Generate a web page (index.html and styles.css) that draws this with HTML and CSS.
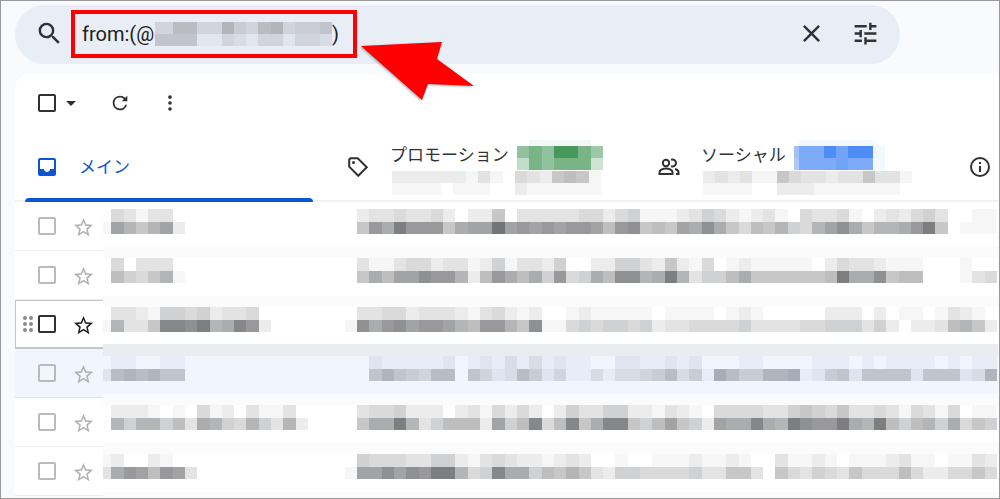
FILE: index.html
```html
<!DOCTYPE html>
<html lang="ja">
<head>
  <meta charset="UTF-8">
  <meta name="viewport" content="width=device-width, initial-scale=1.0">
  <title>メール検索</title>
  <link rel="stylesheet" href="styles.css">
  <script src="script.js" defer></script>
</head>
<body>
  <header class="header">
    <form class="search-bar">
      <button type="button" class="icon-btn" aria-label="検索">
        <svg class="icon-lg" viewBox="0 0 24 24"><path d="M15.5 14h-.79l-.28-.27A6.47 6.47 0 0 0 16 9.5 6.5 6.5 0 1 0 9.5 16c1.61 0 3.09-.59 4.23-1.57l.27.28v.79l5 4.99L20.49 19l-4.99-5zm-6 0a4.5 4.5 0 1 1 0-9 4.5 4.5 0 0 1 0 9z"/></svg>
      </button>
      <div class="query">
        <input type="text" class="query-input" aria-label="メールを検索" value="from:(@">
        <span class="clip query-mosaic"><svg class="mosaic" data-cells="336633743673445 555511321331332"></svg></span>
        <span>)</span>
        <svg class="arrow" viewBox="0 0 114 60"><path d="M1 4 82 0 77 17 114 44 68 42 62 58z"/></svg>
      </div>
      <button type="button" class="icon-btn clear-btn" aria-label="検索をクリア">
        <svg class="icon-lg" viewBox="0 0 24 24"><path d="M19 6.41 17.59 5 12 10.59 6.41 5 5 6.41 10.59 12 5 17.59 6.41 19 12 13.41 17.59 19 19 17.59 13.41 12z"/></svg>
      </button>
      <button type="button" class="icon-btn" aria-label="検索オプションを表示">
        <svg class="icon-lg" viewBox="0 0 24 24"><path d="M3 17v2h6v-2H3zM3 5v2h10V5H3zm10 16v-2h8v-2h-8v-2h-2v6h2zM7 9v2H3v2h4v2h2V9H7zm14 4v-2H11v2h10zm-6-4h2V7h4V5h-4V3h-2v6z"/></svg>
      </button>
    </form>
  </header>

  <main class="panel">
    <div class="toolbar">
      <input type="checkbox" class="check dark" aria-label="すべて選択">
      <button class="icon-btn caret-btn" aria-label="選択"><svg class="caret" viewBox="0 0 10 5"><path d="M0 0h10L5 5z"/></svg></button>
      <button class="icon-btn refresh-btn" aria-label="更新">
        <svg class="icon" viewBox="0 0 24 24"><path d="M17.65 6.35A7.96 7.96 0 0 0 12 4a8 8 0 1 0 7.73 10h-2.08A6 6 0 1 1 12 6c1.66 0 3.14.69 4.22 1.78L14 10h6V4l-2.35 2.35z"/></svg>
      </button>
      <button class="icon-btn more-btn" aria-label="その他">
        <svg class="icon" viewBox="0 0 24 24"><circle cx="12" cy="5.5" r="2"/><circle cx="12" cy="12" r="2"/><circle cx="12" cy="18.5" r="2"/></svg>
      </button>
    </div>

    <nav class="tabs">
      <a href="#main" class="tab active">
        <svg class="tab-icon" viewBox="0 0 24 24"><path d="M19 3H5a2 2 0 0 0-2 2v14c0 1.1.9 2 2 2h14a2 2 0 0 0 2-2V5a2 2 0 0 0-2-2zm0 11h-4c0 1.66-1.35 3-3 3s-3-1.34-3-3H5V5h14v9z"/></svg>
        <span>メイン</span>
      </a>
      <a href="#promotions" class="tab">
        <svg class="tab-icon line" viewBox="0 0 24 24"><path d="M3.2 4.5v7.2L12.3 20.8l8.5-8.5L11.7 3.2H4.5z"/><circle class="dot" cx="7.5" cy="7.5" r="1.5"/></svg>
        <span class="tab-text">
          <span class="tab-title">プロモーション
            <span class="clip green"><svg class="mosaic" data-cells="0111110 9b9ffb8 5b9bbb4"></svg></span>
          </span>
          <svg class="mosaic tab-sub" data-cells="22222213104326761 11110111002111111"></svg>
        </span>
      </a>
      <a href="#social" class="tab">
        <svg class="tab-icon line" viewBox="0 0 24 24"><circle cx="9" cy="8" r="3.2"/><path d="M2.5 19v-1.8c0-2.4 4-3.7 6.500-3.700s6.500 1.300 6.500 3.700V19zM14 4.700c3-.8 5 1 5 3.300s-2 4.100-5 3.300M18 14c2.200.6 3.500 1.700 3.500 3.200V19H19"/></svg>
        <span class="tab-text">
          <span class="tab-title">ソーシャル
            <span class="clip blue"><svg class="mosaic" data-cells="01111110 8bbfcff1 7bbbcbb1"></svg></span>
          </span>
          <svg class="mosaic tab-sub" data-cells="23231164332336331 11110022211111110"></svg>
        </span>
      </a>
      <a href="#updates" class="tab" aria-label="新着">
        <svg class="tab-icon line" viewBox="0 0 24 24"><circle cx="12" cy="12" r="9"/><path d="M12 11v6"/><path d="M12 7v2"/></svg>
      </a>
    </nav>

    <ul class="mail-list">
      <li class="mail">
        <div class="tools">
          <input type="checkbox" class="check" aria-label="選択">
          <button class="icon-btn star" aria-label="スター"></button>
        </div>
        <div class="content first">
          <div class="clip sender"><svg class="mosaic" data-cells="043133000000000000000 1a868a200000000000000"></svg></div>
          <svg class="mosaic subject" data-cells="2334334202260333334424511123542123104334102324530011 6b9ebbb69aafabababba7bc676a9c964768548ac96889be60111"></svg>
        </div>
      </li>
      <li class="mail">
        <div class="tools">
          <input type="checkbox" class="check" aria-label="選択">
          <button class="icon-btn star" aria-label="スター"></button>
        </div>
        <div class="content">
          <div class="clip sender"><svg class="mosaic" data-cells="040333000000000000000 075468100000000000000"></svg></div>
          <svg class="mosaic subject" data-cells="3113442331251332500225532621401211111024332111000100 697aacbb827b9795b4597cc89e8355796666667e99c677000134"></svg>
        </div>
      </li>
      <li class="mail hovered">
        <div class="tools">
          <svg class="drag" viewBox="0 0 12 18"><circle cx="3" cy="3" r="2"/><circle cx="9" cy="3" r="2"/><circle cx="3" cy="9" r="2"/><circle cx="9" cy="9" r="2"/><circle cx="3" cy="15" r="2"/><circle cx="9" cy="15" r="2"/></svg>
          <input type="checkbox" class="check dark" aria-label="選択">
          <button class="icon-btn star" aria-label="スター"></button>
        </div>
        <div class="content">
          <div class="clip sender"><svg class="mosaic" data-cells="033215545233400000000 18336ddce89db20000001"></svg></div>
          <svg class="mosaic subject" data-cells="3344233321342120012111110111101210000022202011013210 c9bcabba87bb86c1145455452334444533334455535202237862"></svg>
        </div>
      </li>
      <li class="mail read">
        <div class="tools">
          <input type="checkbox" class="check" aria-label="選択">
          <button class="icon-btn star" aria-label="スター"></button>
        </div>
        <div class="content">
          <div class="clip sender"><svg class="mosaic" data-cells="011001100000000000000 278786600000000000000"></svg></div>
          <svg class="mosaic subject" data-cells="0211111201213131211002211212000110000111010111101011 0686547706423752411313345735197558891256266662666238"></svg>
        </div>
      </li>
      <li class="mail">
        <div class="tools">
          <input type="checkbox" class="check" aria-label="選択">
          <button class="icon-btn star" aria-label="スター"></button>
        </div>
        <div class="content">
          <div class="clip sender"><svg class="mosaic" data-cells="022210104120311300000 085885739854853820000"></svg></div>
          <svg class="mosaic subject" data-cells="3445222023142420253355221321044443356546334314314011 699e8357772a57d47d69dd657a652a99d98ecbbe98e757859465"></svg>
        </div>
      </li>
      <li class="mail">
        <div class="tools">
          <input type="checkbox" class="check" aria-label="選択">
          <button class="icon-btn star" aria-label="スター"></button>
        </div>
        <div class="content">
          <div class="clip sender"><svg class="mosaic" data-cells="120021000000000000000 39ba7ba30000000000001"></svg></div>
          <svg class="mosaic subject" data-cells="5444335521343221232001001112112100311210111231101132 aacacbee845d9957686325544445336630643543644474224464"></svg>
        </div>
      </li>
    </ul>
  </main>
</body>
</html>
```
FILE: styles.css
```css
* {
  box-sizing: border-box;
}

body {
  margin: 0;
  min-height: 100vh;
  border: 1px solid #999;
  background: #f8fafe;
  color: #202124;
  font-family: Roboto, "Noto Sans CJK JP", sans-serif;
}

svg {
  display: block;
  flex-shrink: 0;
}

.icon-btn {
  display: flex;
  padding: 0;
  border: none;
  background: none;
  color: #303134;
  fill: currentColor;
  cursor: pointer;
}

.icon-lg {
  width: 29px;
  height: 29px;
}

.icon {
  width: 22px;
  height: 22px;
}

/* search */

.header {
  padding: 4px 99px 9px 14px;
}

.search-bar {
  display: flex;
  align-items: center;
  height: 59px;
  padding: 0 20px 2px;
  border-radius: 30px;
  background: #e9edf6;
}

.query {
  position: relative;
  display: flex;
  align-items: center;
  width: 286px;
  height: 48px;
  margin: 0 auto 0 7px;
  padding-left: 7px;
  border: 4px solid #f00;
  font-size: 20px;
}

.query-input {
  width: 73px;
  padding: 0;
  border: none;
  outline: none;
  background: none;
  color: #202124;
  font: inherit;
}

.query-mosaic {
  width: 177px;
  height: 24px;
}

.query-mosaic .mosaic {
  width: 184px;
  height: 24px;
}

.arrow {
  position: absolute;
  top: 28px;
  left: calc(100% + 7px);
  z-index: 1;
  width: 114px;
  height: 60px;
  fill: #f00;
  filter: drop-shadow(-1px 1px 1px rgba(60, 110, 130, 0.5));
}

.clear-btn {
  margin-right: 25px;
}

/* mosaic blocks */

.mosaic {
  fill: #6a6b6e;
  shape-rendering: crispEdges;
}

.clip {
  display: flex;
  justify-content: flex-end;
  align-items: flex-end;
  overflow: hidden;
}

.green {
  width: 86px;
  height: 30px;
}

.green .mosaic {
  width: 86px;
  height: 36px;
  fill: #3c9150;
}

.blue {
  width: 91px;
  height: 30px;
}

.blue .mosaic {
  width: 98px;
  height: 36px;
  fill: #4285f4;
}

/* panel */

.panel {
  margin: 0 1px 2px 14px;
  border-radius: 16px 0 0 0;
  background: #fff;
}

.toolbar {
  display: flex;
  align-items: center;
  height: 60px;
  padding-left: 23px;
}

.check {
  appearance: none;
  flex-shrink: 0;
  width: 18px;
  height: 18px;
  margin: 0;
  border: 2px solid #b9babc;
  border-radius: 2px;
}

.check.dark {
  border-color: #303134;
}

.check:checked {
  background: #0b57d0;
}

.caret-btn {
  margin-left: 10px;
}

.caret {
  width: 10px;
  height: 5px;
}

.refresh-btn {
  margin-left: 33px;
}

.more-btn {
  margin-left: 28px;
}

.tabs {
  display: grid;
  grid-template-columns: repeat(3, 311fr) 50fr;
  height: 69px;
  border-bottom: 2px solid #f0f2f3;
}

.tab {
  position: relative;
  display: flex;
  align-items: center;
  gap: 20px;
  padding-left: 20px;
  color: #303134;
  font-size: 17px;
  line-height: 24px;
  text-decoration: none;
  white-space: nowrap;
}

.tab.active {
  color: #0b57d0;
}

.tab.active::after {
  content: "";
  position: absolute;
  right: 13px;
  bottom: -2px;
  left: 10px;
  height: 4px;
  border-radius: 4px 4px 0 0;
  background: #0b57d0;
}

.tab-icon {
  width: 24px;
  height: 24px;
  fill: currentColor;
}

.tab-icon.line {
  fill: none;
  stroke: currentColor;
  stroke-width: 2;
}

.tab-icon .dot {
  fill: currentColor;
  stroke: none;
}

.tab-text {
  padding-top: 2px;
}

.tab-title {
  display: flex;
  align-items: center;
  gap: 8px;
  height: 30px;
  line-height: 26px;
}

.tab-sub {
  width: 209px;
  height: 24px;
  margin: 1px 0 0 2px;
}

/* mail list */

.mail-list {
  margin: 0;
  padding: 0;
  list-style: none;
}

.mail {
  display: flex;
  height: 49px;
}

.tools {
  display: flex;
  align-items: center;
  justify-content: flex-end;
  width: 88px;
  padding-right: 8px;
  border-bottom: 1px solid #eceff1;
}

.drag {
  width: 12px;
  height: 18px;
  margin-right: 4px;
  fill: #8a8b8d;
}

.star {
  margin-left: 16px;
  padding-top: 2px;
  color: #b0b1b3;
}

.star svg {
  width: 23px;
  height: 23px;
}

.content {
  flex: 1;
  display: flex;
  min-width: 0;
  padding-right: 1px;
  border-top: 7px solid #fbfbfb;
  border-bottom: 4px solid #fbfbfb;
}

.content.first {
  border-top-color: #fff;
}

.sender {
  width: 254px;
  height: 25px;
}

.sender .mosaic {
  width: 258px;
  height: 25px;
}

.subject {
  flex: 1;
  min-width: 0;
  height: 25px;
}

.hovered .tools {
  border: 1px solid #c4c7c9;
  border-width: 1px 0 2px 1px;
}

.hovered .star {
  color: #202124;
}

.hovered .content {
  border-bottom: 5px solid #ebecf0;
}

.read {
  background: #f0f5fe;
}

.read .tools {
  border-bottom-color: #dfe3f2;
}

.read .content {
  border-top-color: #ebecf0;
  border-bottom-color: #f8f9fc;
}

.read .mosaic {
  fill: #70737c;
}
```
FILE: script.js
```javascript
const SVG_NS = 'http://www.w3.org/2000/svg';
const STAR = 'M22 9.240l-7.190-.62L12 2 9.190 8.630 2 9.240l5.460 4.730L5.820 21 12 17.270 18.180 21l-1.630-7.030L22 9.240zM12 15.400l-3.760 2.270 1-4.280-3.320-2.880 4.380-.38L12 6.100l1.710 4.040 4.380.38-3.320 2.880 1 4.280L12 15.400z';

// each row of cells is a string of hex digits, 0 = empty, f = darkest
document.querySelectorAll('.mosaic').forEach(svg => {
  const rows = svg.dataset.cells.split(' ');
  svg.setAttribute('viewBox', `0 0 ${rows[0].length} ${rows.length}`);
  svg.setAttribute('preserveAspectRatio', 'none');
  rows.forEach((row, y) => {
    [...row].forEach((cell, x) => {
      const level = parseInt(cell, 16);
      if (!level) return;
      const rect = document.createElementNS(SVG_NS, 'rect');
      rect.setAttribute('x', x);
      rect.setAttribute('y', y);
      rect.setAttribute('width', 1);
      rect.setAttribute('height', 1);
      rect.setAttribute('fill-opacity', level / 16);
      svg.appendChild(rect);
    });
  });
});

document.querySelectorAll('.star').forEach(button => {
  button.innerHTML = `<svg viewBox="0 0 24 24"><path d="${STAR}"/></svg>`;
});
```
